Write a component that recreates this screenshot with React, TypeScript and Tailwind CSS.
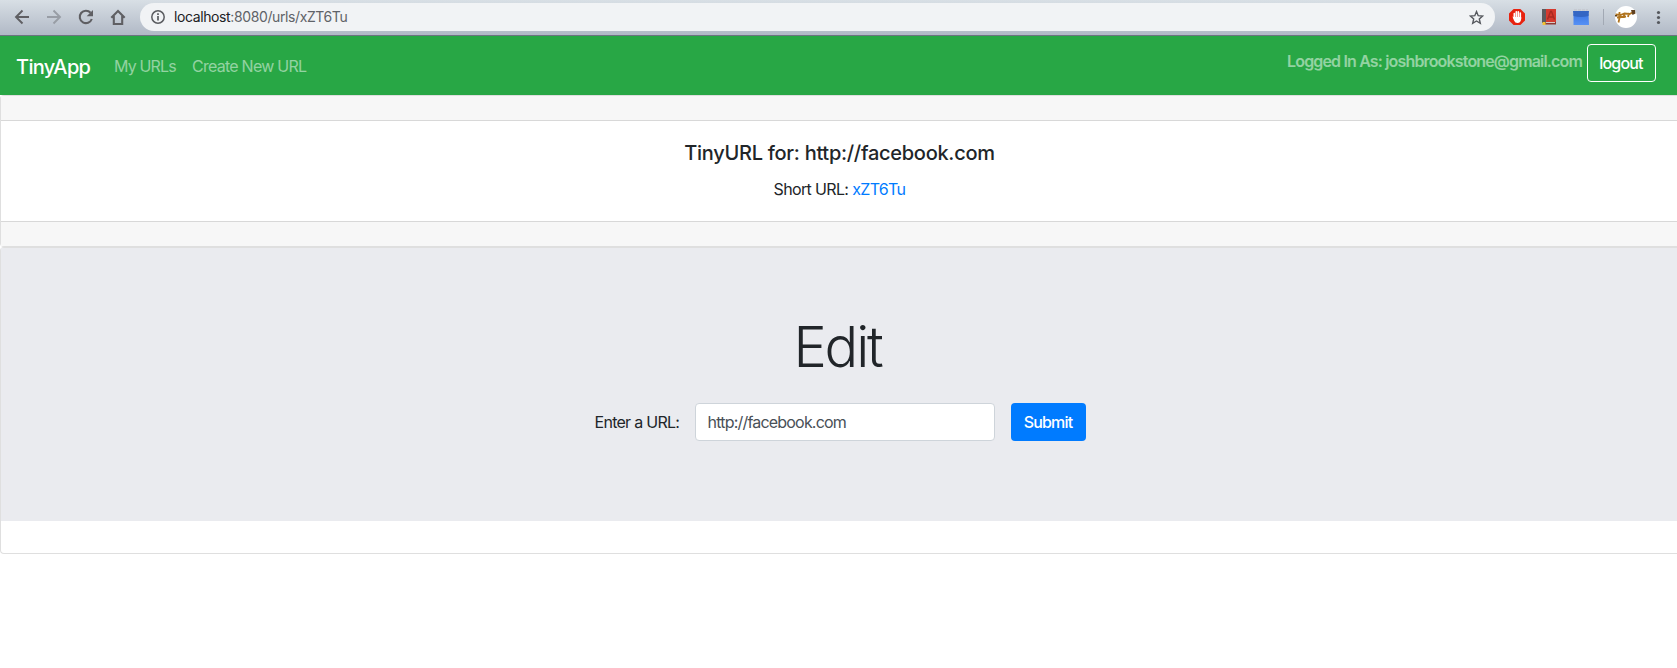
import React from "react";

function BrowserBar() {
  return (
    <div className="flex h-9 items-start border-b border-[#6c7480] bg-linear-to-b from-[#d8dfe5] to-[#b1b9c6]">
      <div className="flex h-[35px] w-[140px] shrink-0 items-center text-[#5f5f63]">
        <svg width="140" height="35" viewBox="0 0 140 35" fill="none" stroke="currentColor" strokeWidth="1.9">
          <path d="M29 17H16.5M22.5 10.5L16 17L22.5 23.5" />
          <path d="M47 17H59.5M53.5 10.5L60 17L53.5 23.5" stroke="#989da5" />
          <path d="M90.600 12.800A6.200 6.200 0 1 0 91.800 19" strokeWidth="2.100" />
          <path d="M93 10V16.300H86.700Z" fill="currentColor" stroke="none" />
          <path d="M111.300 17.700L118 11L124.700 17.700M113.800 16V24H122.200V16" strokeWidth="2.100" />
        </svg>
      </div>
      <div className="mt-[3px] flex h-7 grow items-center rounded-full bg-[#f1f3f5] px-[11px]">
        <svg width="14" height="14" viewBox="0 0 14 14" fill="none" stroke="#5a5c60" strokeWidth="1.5">
          <circle cx="7" cy="7" r="6.2" />
          <path d="M7 6V10.500M7 3.300V5" strokeWidth="1.700" />
        </svg>
        <span className="ml-[9px] grow text-[14px] leading-none tracking-[-0.39px] text-[#5f6368]">
          <span className="text-[#202124]">localhost</span>:8080/urls/xZT6Tu
        </span>
        <svg width="15" height="15" viewBox="0 0 15 15" fill="none" stroke="#55585d" strokeWidth="1.400">
          <path d="M7.500 1.600L9.200 5.700L13.600 6.100L10.300 9L11.300 13.300L7.500 11L3.700 13.300L4.700 9L1.400 6.100L5.800 5.700Z" />
        </svg>
      </div>
      <svg className="h-[35px] w-[182px] shrink-0" viewBox="1495 0 182 35">
        <defs>
          <linearGradient id="calendar" x1="0" y1="0" x2="0" y2="1">
            <stop offset="0" stopColor="#3d78e3" />
            <stop offset="1" stopColor="#5791f5" />
          </linearGradient>
        </defs>
        <path d="M1513.600 9h6.800l4.600 4.600v6.800l-4.600 4.600h-6.800l-4.600-4.600v-6.800z" fill="#e8220f" />
        <path d="M1514.300 13.500v5M1516.300 11.700v6M1518.300 11.700v6M1520.300 13v6" stroke="white" strokeWidth="1.600" strokeLinecap="round" />
        <path d="M1512.500 16.500l1.500.5h7.200v2q-.5 4-3.700 4q-2.500 0-3.500-2.500z" fill="white" />
        <path d="M1542 9h14v13h-14z" fill="#d53a2f" />
        <path d="M1542 9h4v14h-4z" fill="#5b5b5f" />
        <path d="M1543 22h13v2.500h-13z" fill="#8e3a34" />
        <path d="M1546 22h9v1h-9z" fill="#d8c9c4" />
        <path d="M1542.500 22h3v3h-3z" fill="#f1c232" />
        <path d="M1547.500 19.500l3-8h1l3 8M1549 17h4" stroke="#a82b22" strokeWidth="1.400" fill="none" />
        <path d="M1573.500 14h15l.5 11h-15.500z" fill="url(#calendar)" />
        <path d="M1573 11h16l-.5 5q-7.500 2-15 0z" fill="#3466c4" />
        <path d="M1574 9.800h14" stroke="#c6cad1" strokeWidth="1.800" strokeDasharray="3 1" />
        <path d="M1603.500 9v16" stroke="#a2a9b4" />
        <circle cx="1626" cy="17" r="11" fill="white" />
        <path
          d="M1615.500 14.500l5 .5l4-1.500l5 .5l4-2M1619.500 12v6l-1 4.500M1617 17.500l9-1M1624 14v4M1629 13l-1 4"
          stroke="#b0741f"
          strokeWidth="1.800"
          fill="none"
        />
        <path d="M1631 10h4l.5 3.500l-3 1.500zM1615 15h2v1.500h-2z" fill="#60401f" />
        <g fill="#55585d">
          <circle cx="1658.500" cy="12.500" r="1.600" />
          <circle cx="1658.500" cy="17.500" r="1.600" />
          <circle cx="1658.500" cy="22.500" r="1.600" />
        </g>
      </svg>
    </div>
  );
}

function Navbar() {
  return (
    <nav className="flex h-[59px] items-start bg-[#28a745] pr-[21px] pl-4 text-white/50">
      <a className="mt-4 w-[98px] text-[20px] leading-[30px] font-medium tracking-[-0.65px] text-white">TinyApp</a>
      <a className="mt-[18px] w-[78px] text-[16px] leading-6 tracking-[-0.85px]">My URLs</a>
      <a className="mt-[18px] text-[16px] leading-6 tracking-[-0.75px]">Create New URL</a>
      <span className="mt-[13px] ml-auto text-[16px] leading-6 font-semibold tracking-[-0.84px]">
        Logged In As: joshbrookstone@gmail.com
      </span>
      <button className="mt-2 ml-[5px] h-[38px] w-[69px] rounded border border-white pr-px text-[16px] font-medium tracking-[-0.8px] text-white">
        logout
      </button>
    </nav>
  );
}

export default function App() {
  return (
    <div className="h-[668px] w-full overflow-hidden bg-white font-['Inter','Liberation_Sans',sans-serif] text-[#212529]">
      <BrowserBar />
      <Navbar />
      <section className="h-[152px] rounded-l border border-r-0 border-[#dfdfdf] bg-white text-center">
        <div className="h-[25px] border-b border-[#d8d8d8] bg-[#f7f7f7]" />
        <div className="h-[100px] pt-5 pl-px">
          <h5 className="text-[20px] leading-6 font-medium tracking-[-0.28px]">TinyURL for: http://facebook.com</h5>
          <p className="mt-3 text-[16px] leading-6 tracking-[-0.65px]">
            Short URL: <a className="text-[#007bff]">xZT6Tu</a>
          </p>
        </div>
        <div className="h-[25px] border-t border-[#d8d8d8] bg-[#f7f7f7]" />
      </section>
      <section className="h-[307px] rounded-l border border-r-0 border-[#dfdfdf] bg-white">
        <div className="flex h-[273px] flex-col items-center bg-[#eaebef] pt-[66px]">
          <h1 className="pr-[3px] text-[56px] leading-[67px] font-light tracking-[-2.2px]">Edit</h1>
          <form className="mt-[22px] flex items-center pl-[2px] text-[16px]">
            <label className="w-[100px] tracking-[-0.72px]">Enter a URL:</label>
            <input
              className="h-[38px] w-[300px] rounded border border-[#ced4da] bg-white px-3 tracking-[-0.8px] text-[#495057]"
              defaultValue="http://facebook.com"
            />
            <button
              type="button"
              className="ml-4 h-[38px] w-[75px] rounded bg-[#007bff] font-medium tracking-[-0.8px] text-white"
            >
              Submit
            </button>
          </form>
        </div>
      </section>
    </div>
  );
}
